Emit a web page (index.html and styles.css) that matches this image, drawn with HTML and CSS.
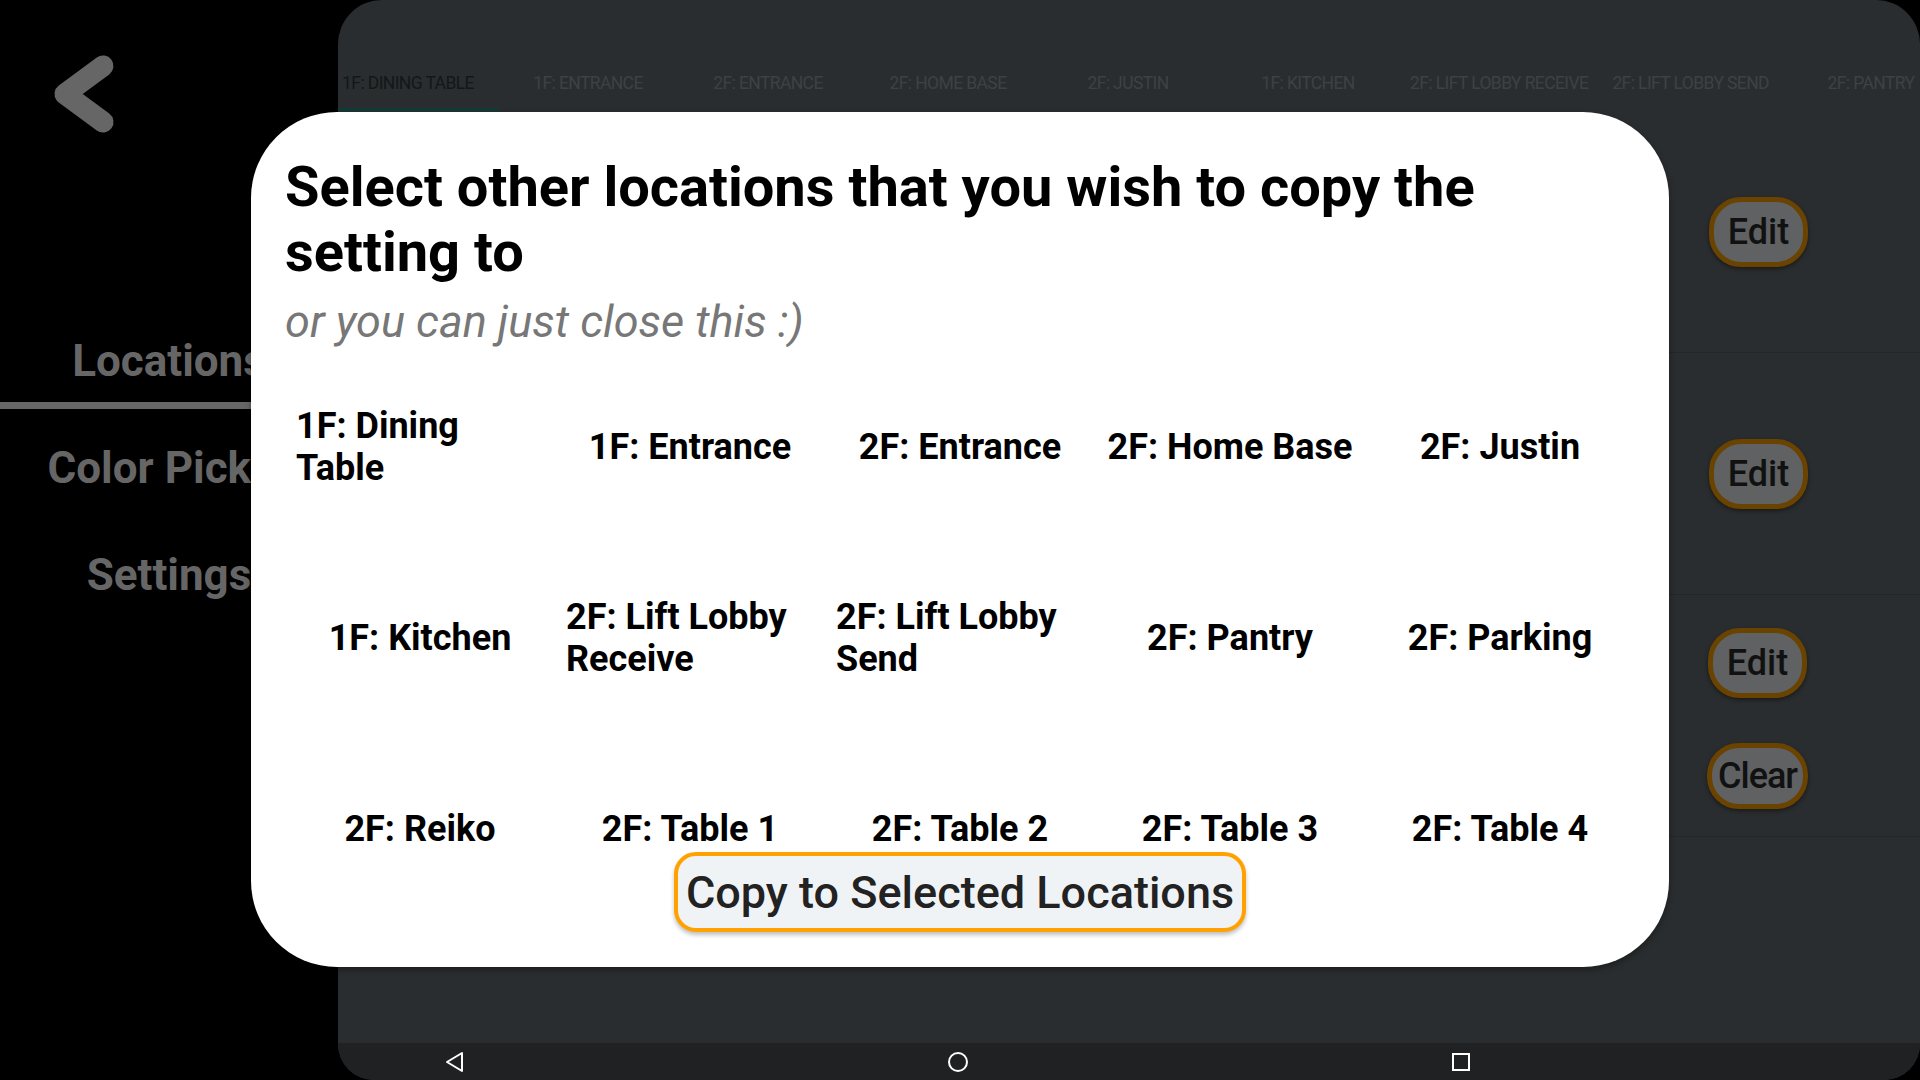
FILE: index.html
```html
<!DOCTYPE html>
<html lang="en">
<head>
<meta charset="utf-8">
<title>Copy setting to locations</title>
<link rel="stylesheet" href="styles.css">
</head>
<body>
<div class="app">
  <aside class="sidebar">
    <div class="sidebar-head">
      <svg class="back" width="80" height="100" viewBox="0 0 80 100" aria-hidden="true">
        <polyline points="53,17 15,45 53,73" fill="none" stroke="#666" stroke-width="21" stroke-linecap="round" stroke-linejoin="round"/>
      </svg>
    </div>
    <nav class="side-nav">
      <div class="side-item active">Locations</div>
      <div class="side-item">Color Picker</div>
      <div class="side-item">Settings</div>
    </nav>
  </aside>

  <main class="panel">
    <div class="tabs">
      <div class="tab active">1F: DINING TABLE</div>
      <div class="tab">1F: ENTRANCE</div>
      <div class="tab">2F: ENTRANCE</div>
      <div class="tab">2F: HOME BASE</div>
      <div class="tab">2F: JUSTIN</div>
      <div class="tab">1F: KITCHEN</div>
      <div class="tab">2F: LIFT LOBBY RECEIVE</div>
      <div class="tab">2F: LIFT LOBBY SEND</div>
      <div class="tab">2F: PANTRY</div>
    </div>
    <div class="rows">
      <div class="row"><div class="actions"><button class="pill">Edit</button></div></div>
      <div class="row"><div class="actions"><button class="pill">Edit</button></div></div>
      <div class="row row-double"><div class="actions"><button class="pill">Edit</button><button class="pill pill-clear">Clear</button></div></div>
      <div class="row"></div>
    </div>
    <nav class="sysnav">
      <svg width="20" height="22" viewBox="0 0 20 22" aria-hidden="true"><polygon points="2,11 17,2 17,20" fill="none" stroke="#fff" stroke-width="2" stroke-linejoin="round"/></svg>
      <svg width="20" height="22" viewBox="0 0 20 22" aria-hidden="true"><circle cx="10" cy="11" r="9" fill="none" stroke="#fff" stroke-width="2"/></svg>
      <svg width="20" height="22" viewBox="0 0 20 22" aria-hidden="true"><rect x="2" y="3" width="16" height="16" fill="none" stroke="#fff" stroke-width="2"/></svg>
    </nav>
  </main>

  <section class="dialog">
    <h1 class="dialog-title">Select other locations that you wish to copy the setting to</h1>
    <p class="dialog-sub">or you can just close this :)</p>
    <div class="loc-grid">
      <div class="loc"><span class="loc-label full">1F: Dining Table</span></div>
      <div class="loc"><span class="loc-label">1F: Entrance</span></div>
      <div class="loc"><span class="loc-label">2F: Entrance</span></div>
      <div class="loc"><span class="loc-label">2F: Home Base</span></div>
      <div class="loc"><span class="loc-label">2F: Justin</span></div>
      <div class="loc"><span class="loc-label">1F: Kitchen</span></div>
      <div class="loc"><span class="loc-label full">2F: Lift Lobby Receive</span></div>
      <div class="loc"><span class="loc-label full">2F: Lift Lobby Send</span></div>
      <div class="loc"><span class="loc-label">2F: Pantry</span></div>
      <div class="loc"><span class="loc-label">2F: Parking</span></div>
      <div class="loc"><span class="loc-label">2F: Reiko</span></div>
      <div class="loc"><span class="loc-label">2F: Table 1</span></div>
      <div class="loc"><span class="loc-label">2F: Table 2</span></div>
      <div class="loc"><span class="loc-label">2F: Table 3</span></div>
      <div class="loc"><span class="loc-label">2F: Table 4</span></div>
    </div>
    <button class="copy-btn">Copy to Selected Locations</button>
  </section>
</div>
</body>
</html>
```

FILE: styles.css
```css
* { box-sizing: border-box; }

html, body {
  margin: 0;
  padding: 0;
  width: 1920px;
  height: 1080px;
  overflow: hidden;
  background: #000;
  font-family: Roboto, "Noto Sans", "Liberation Sans", sans-serif;
}

.app {
  position: relative;
  display: flex;
  width: 1920px;
  height: 1080px;
}

/* Sidebar */
.sidebar {
  width: 338px;
  flex: none;
  background: #000;
  display: flex;
  flex-direction: column;
}

.sidebar-head {
  height: 302px;
  padding: 49px 0 0 50px;
}

.back { display: block; }

.side-item {
  height: 107px;
  padding-top: 33px;
  text-align: center;
  font-size: 44px;
  line-height: 52px;
  font-weight: 700;
  color: #666;
  white-space: nowrap;
}

.side-item.active {
  border-bottom: 7px solid #666;
}

/* Main panel */
.panel {
  flex: 1;
  display: flex;
  flex-direction: column;
  background: #2a2d2f;
  border-radius: 44px 44px 36px 36px;
  overflow: hidden;
}

.tabs {
  height: 111px;
  flex: none;
  display: flex;
  margin-left: -20px;
  white-space: nowrap;
}

.tab {
  flex: none;
  min-width: 180px;
  height: 111px;
  padding: 73px 12px 0;
  text-align: center;
  font-size: 17.5px;
  line-height: 20px;
  letter-spacing: -0.6px;
  color: #3e4143;
}

.tab.active {
  color: #141617;
  border-bottom: 3px solid #0e3c37;
}

.rows {
  flex: 1;
  overflow: hidden;
}

.row {
  height: 242px;
  border-bottom: 1px solid #232628;
  display: flex;
  justify-content: flex-end;
  align-items: center;
  padding-right: 112px;
}

.row-double {
  padding-top: 6px;
}

.actions {
  display: flex;
  flex-direction: column;
  align-items: center;
  gap: 45px;
}

.pill {
  min-width: 99px;
  height: 70px;
  padding: 0 12px;
  border: 5px solid #6a4300;
  border-radius: 32px;
  background: #5f6163;
  color: #111;
  font-family: Roboto, "Liberation Sans", sans-serif;
  font-size: 36px;
  font-weight: 500;
  box-shadow: 0 2px 4px rgba(0, 0, 0, 0.45);
}

.pill-clear {
  min-width: 101px;
  height: 66px;
  padding: 0 4px;
  letter-spacing: -1px;
}

.sysnav {
  height: 37px;
  flex: none;
  background: #1f2123;
  display: flex;
  align-items: center;
  padding-left: 107px;
  gap: 483px;
}

.sysnav svg { display: block; }

/* Dialog overlay */
.dialog {
  position: absolute;
  left: 251px;
  top: 112px;
  width: 1418px;
  height: 855px;
  background: #fff;
  border-radius: 86px;
  padding: 43px 34px 34px;
  display: flex;
  flex-direction: column;
  box-shadow: 0 3px 6px rgba(0, 0, 0, 0.35);
}

.dialog-title {
  margin: 0;
  font-size: 56px;
  line-height: 65px;
  font-weight: 700;
  color: #000;
}

.dialog-sub {
  margin: 10px 0 0;
  font-size: 45px;
  line-height: 53px;
  font-style: italic;
  color: #777;
}

.loc-grid {
  margin-top: 3px;
  height: 501px;
  flex: none;
  overflow: hidden;
  display: grid;
  grid-template-columns: repeat(5, 1fr);
  grid-auto-rows: 191px;
}

.loc {
  display: flex;
  justify-content: center;
  align-items: center;
  padding: 0 11px;
  min-width: 0;
}

.loc-label {
  display: block;
  font-size: 36px;
  line-height: 42px;
  font-weight: 700;
  color: #000;
  text-align: left;
  white-space: nowrap;
}

.loc-label.full {
  width: 100%;
  white-space: normal;
}

.copy-btn {
  align-self: center;
  height: 80px;
  padding: 0 8px;
  border: 4px solid #ffa200;
  border-radius: 22px;
  background: #f0f3f6;
  color: #222;
  font-family: Roboto, "Liberation Sans", sans-serif;
  font-size: 45px;
  font-weight: 500;
  box-shadow: 0 3px 4px rgba(0, 0, 0, 0.25);
}
```
